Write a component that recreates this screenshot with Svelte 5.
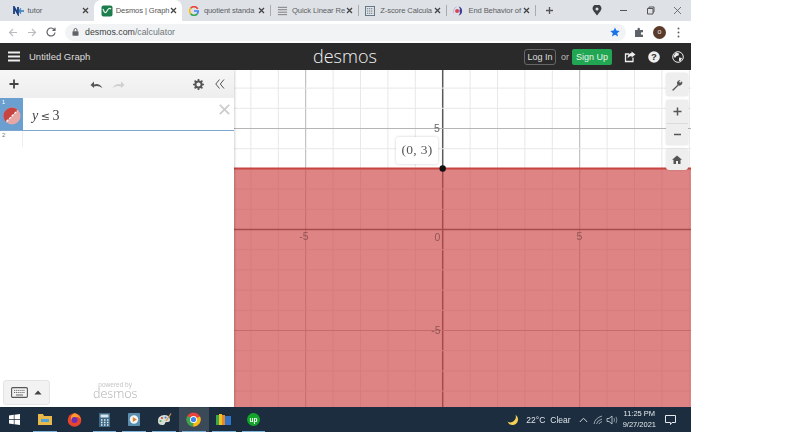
<script>
  const tabs = [
    { t: 'tutor', k: 'ne' },
    { t: 'Desmos | Graph', k: 'de', active: true },
    { t: 'quotient standa', k: 'g' },
    { t: 'Quick Linear Re', k: 'q', sep: true },
    { t: 'Z-score Calcula', k: 'z', sep: true },
    { t: 'End Behavior of', k: 'e', sep: true }
  ];
  const ox = 442.7, oy = 229.5, ux = 27.4, uy = 20.2;
  const xs = [];
  for (let i = -7; i <= 9; i++) xs.push({ v: i, x: ox + i * ux });
  const ys = [];
  for (let i = -8; i <= 7; i++) ys.push({ v: i, y: oy - i * uy });
  const under = [true, false, true, true, true, true, true, true];
</script>

<div class="page">
  <div class="window">
    <div class="tabstrip">
      {#each tabs as tab}
        <div class="tab" class:active={tab.active} class:sep={tab.sep}>
          <span class="fav">
            {#if tab.k === 'ne'}
              <svg width="12" height="10" viewBox="0 0 12 10"><path d="M1 8V1l4 7V1" fill="none" stroke="#1c3f80" stroke-width="1.8"/><path d="M7 5h4M8 2.500a3 3 0 0 0 0 5" fill="none" stroke="#2a7bc0" stroke-width="1.300"/></svg>
            {:else if tab.k === 'de'}
              <svg width="12" height="12" viewBox="0 0 12 12"><rect x=".5" y=".5" width="11" height="11" rx="2" fill="#1e7d4c"/><path d="M2 4q2 6 4 2t4-2" fill="none" stroke="#dff2e6" stroke-width="1.200"/></svg>
            {:else if tab.k === 'g'}
              <svg width="10" height="10" viewBox="0 0 12 12"><path d="M10.500 3.500A5 5 0 0 0 2 2.800" fill="none" stroke="#ea4335" stroke-width="2"/><path d="M2 2.800a5 5 0 0 0 0 6.400" fill="none" stroke="#fbbc05" stroke-width="2"/><path d="M2 9.200a5 5 0 0 0 8 0" fill="none" stroke="#34a853" stroke-width="2"/><path d="M10 9.200A5 5 0 0 0 11 6H6" fill="none" stroke="#4285f4" stroke-width="2"/></svg>
            {:else if tab.k === 'q'}
              <svg width="11" height="10" viewBox="0 0 12 10"><path d="M1 1h10M1 3.600h10M1 6.300h10M1 9h10" stroke="#777" stroke-width="1"/></svg>
            {:else if tab.k === 'z'}
              <svg width="10" height="10" viewBox="0 0 11 11"><rect x=".5" y=".5" width="10" height="10" fill="#e4e6e8" stroke="#5c6f80"/><path d="M2 3h7M2 5.500h7M2 8h7" stroke="#5c6f80" stroke-width="1" stroke-dasharray="1.500 .7"/></svg>
            {:else}
              <svg width="10" height="10" viewBox="0 0 11 11"><path d="M6 .6a5 5 0 0 1 0 9.800 4 4 0 0 0 1-4.900A4 4 0 0 0 6 .6z" fill="#3f3f97"/><circle cx="4.500" cy="5.500" r="2.200" fill="#d9425a"/><path d="M4 1A5 5 0 0 0 1 8" fill="none" stroke="#b9b9dd"/></svg>
            {/if}
          </span>
          <span class="tabtitle">{tab.t}</span>
          <svg class="tabx" width="7" height="7" viewBox="0 0 7 7"><path d="M1 1l5 5M6 1l-5 5" stroke="#444" stroke-width="1.300"/></svg>
        </div>
      {/each}
      <span class="lastsep"></span>
      <svg class="newtab" width="9" height="9" viewBox="0 0 9 9"><path d="M4.500 1v7M1 4.500h7" stroke="#555" stroke-width="1.300"/></svg>
      <span class="grow"></span>
      <svg class="winrec" width="10" height="11" viewBox="0 0 10 11"><path d="M5 10.500 1.500 6a4.300 4.300 0 1 1 7 0z" fill="#3c4043"/><circle cx="5" cy="4" r="1.500" fill="#dee1e6"/></svg>
      <div class="winbtns">
        <svg width="9" height="9" viewBox="0 0 9 9"><path d="M1 4.500h7" stroke="#555"/></svg>
        <svg width="9" height="9" viewBox="0 0 9 9"><path d="M1.500 2.500h5.500v5.500h-5.500zM3 2.500V1h5v5H7" fill="none" stroke="#555"/></svg>
        <svg width="9" height="9" viewBox="0 0 9 9"><path d="M1 1l7 7M8 1l-7 7" stroke="#555" stroke-width=".8"/></svg>
      </div>
    </div>

    <div class="urlbar">
      <svg width="10" height="9" viewBox="0 0 10 9"><path d="M9 4.500H1.500M5 1 1.500 4.500 5 8" fill="none" stroke="#b9bcc0" stroke-width="1.200"/></svg>
      <svg width="10" height="9" viewBox="0 0 10 9"><path d="M1 4.500h7.500M5 1l3.500 3.500L5 8" fill="none" stroke="#b9bcc0" stroke-width="1.200"/></svg>
      <svg width="10" height="10" viewBox="0 0 10 10"><path d="M8.500 3A4 4 0 1 0 9 5.500M9 .8V3.400H6.400" fill="none" stroke="#5f6368" stroke-width="1.200"/></svg>
      <div class="omni">
        <svg width="7" height="8" viewBox="0 0 7 8"><rect x=".5" y="3.200" width="6" height="4.500" rx=".6" fill="#5f6368"/><path d="M2 3.500V2a1.500 1.500 0 0 1 3 0v1.500" fill="none" stroke="#5f6368"/></svg>
        <span class="url">desmos.com<span class="urlpath">/calculator</span></span>
        <span class="grow"></span>
        <svg width="10" height="10" viewBox="0 0 10 10"><path d="M5 .5 6.400 3.600 9.700 4 7.200 6.200 8 9.500 5 7.800 2 9.500 2.800 6.200.3 4 3.600 3.600z" fill="#1a73e8"/></svg>
      </div>
      <svg class="puzzle" width="10" height="10" viewBox="0 0 10 10"><path d="M1 3h2.500V2a1.200 1.200 0 0 1 2.400 0v1H9v2.300H8a1.200 1.200 0 0 0 0 2.400h1V10H1z" fill="#5f6368"/></svg>
      <span class="avatar">o</span>
      <svg class="dots" width="3" height="11" viewBox="0 0 3 11"><circle cx="1.500" cy="1.500" r="1" fill="#5f6368"/><circle cx="1.500" cy="5.500" r="1" fill="#5f6368"/><circle cx="1.500" cy="9.500" r="1" fill="#5f6368"/></svg>
    </div>

    <header class="dheader">
      <div class="hleft">
        <svg width="12" height="11" viewBox="0 0 12 11"><path d="M0 1.500h12M0 5.500h12M0 9.500h12" stroke="#eee" stroke-width="1.800"/></svg>
        <span class="gtitle">Untitled Graph</span>
      </div>
      <span class="logo">desmos</span>
      <div class="hright">
        <span class="login">Log In</span>
        <span class="or">or</span>
        <span class="signup">Sign Up</span>
        <svg class="hicon first" width="12" height="12" viewBox="0 0 12 12"><path d="M9 6.500V10.500H1.500V3H5" fill="none" stroke="#eee" stroke-width="1.300"/><path d="M11.500 3.500 7.500.5V2Q3.500 2.500 3.500 7.500 5 4.800 7.500 5V6.500z" fill="#eee"/></svg>
        <svg class="hicon" width="12" height="12" viewBox="0 0 12 12"><circle cx="6" cy="6" r="5.800" fill="#eee"/><text x="6" y="9.300" class="qm">?</text></svg>
        <svg class="hicon" width="12" height="12" viewBox="0 0 12 12"><circle cx="6" cy="6" r="5.300" fill="#2a2a2a" stroke="#eee" stroke-width="1"/><path d="M4 1.500 7 2.500 6.500 4.500 4.500 5 3 7 1.500 5zM7 6.500l3 .5-1.500 3H7z" fill="#eee"/></svg>
      </div>
    </header>

    <div class="main">
      <aside class="side">
        <div class="sidebar-tools">
          <svg class="plus" width="10" height="10" viewBox="0 0 10 10"><path d="M5 .5v9M.5 5h9" stroke="#444" stroke-width="1.800"/></svg>
          <svg class="undo" width="13" height="9" viewBox="0 0 13 9"><path d="M12.500 8Q9.500 3 4 4.400V1.500L.5 5 4 8V6.500Q8 5 12.500 8z" fill="#555"/></svg>
          <svg class="redo" width="13" height="9" viewBox="0 0 13 9"><path d="M.5 8Q3.500 3 9 4.400V1.500L12.500 5 9 8V6.500Q5 5 .5 8z" fill="#cfcfcf"/></svg>
          <span class="grow"></span>
          <svg width="11" height="11" viewBox="0 0 11 11"><circle cx="5.500" cy="5.500" r="3.100" fill="none" stroke="#555" stroke-width="2"/><path d="M5.500 0v2M5.500 9v2M0 5.500h2M9 5.500h2M1.600 1.600 3 3M8 8l1.400 1.400M9.400 1.600 8 3M3 8 1.600 9.400" stroke="#555" stroke-width="1.700"/></svg>
          <svg class="collapse" width="10" height="10" viewBox="0 0 10 10"><path d="M4.500 .5.800 5l3.700 4.500M9 .5 5.300 5 9 9.500" fill="none" stroke="#555" stroke-width="1"/></svg>
        </div>
        <div class="expr active-expr">
          <div class="strip">
            <span class="num light">1</span>
            <svg width="18" height="18" viewBox="0 0 18 18" class="swatch"><circle cx="9" cy="9" r="8.500" fill="#e8a7a5"/><path d="M2.900 15A8.500 8.500 0 0 1 15 2.900z" fill="#c74440"/><path d="M3.500 14.500 14.500 3.500" stroke="#fff" stroke-width="1.300" stroke-dasharray="2.500 1.200"/></svg>
          </div>
          <div class="math"><i>y</i><span class="leq">≤</span>3</div>
          <svg class="del" width="11" height="11" viewBox="0 0 11 11"><path d="M.8.800l9.400 9.400M10.200.800.800 10.200" stroke="#ccc" stroke-width="1.800"/></svg>
        </div>
        <div class="expr empty-expr">
          <div class="strip blank"><span class="num">2</span></div>
        </div>
        <span class="grow"></span>
        <div class="sidefoot">
          <div class="kbd">
            <svg width="17" height="11" viewBox="0 0 17 11"><rect x=".6" y=".6" width="15.800" height="9.800" rx="1.200" fill="none" stroke="#555" stroke-width="1.100"/><path d="M3 3.400h11M3 5.500h11" stroke="#666" stroke-dasharray="1.200 .9"/><path d="M5 8h7" stroke="#666"/></svg>
            <svg width="8" height="5" viewBox="0 0 8 5"><path d="M4 .4 7.600 4.500H.4z" fill="#444"/></svg>
          </div>
          <div class="powered">
            <span class="pw">powered by</span>
            <span class="pd">desmos</span>
          </div>
        </div>
      </aside>

      <div class="graph">
        <svg class="plot" viewBox="234 70 457 337" width="457" height="337">
          <rect x="234" y="70" width="457" height="337" fill="#fff"/>
          {#each xs as l}
            <line x1={l.x} x2={l.x} y1="70" y2="407" stroke={l.v === 0 ? '#5a5a5a' : l.v % 5 === 0 ? '#b5b5b5' : '#e8e8e8'} stroke-width={l.v === 0 ? 1.500 : 1}/>
          {/each}
          {#each ys as l}
            <line x1="234" x2="691" y1={l.y} y2={l.y} stroke={l.v === 0 ? '#5a5a5a' : l.v % 5 === 0 ? '#b5b5b5' : '#e8e8e8'} stroke-width={l.v === 0 ? 1.500 : 1}/>
          {/each}
          <rect x="234" y="168.500" width="457" height="238.500" fill="#cf4444" opacity=".66"/>
          <line x1="234" x2="691" y1="168.500" y2="168.500" stroke="#c74440" stroke-width="2"/>
          <text class="lbl" x="304" y="240" text-anchor="middle">-5</text>
          <text class="lbl" x="437.500" y="240.500" text-anchor="middle">0</text>
          <text class="lbl" x="579.500" y="240" text-anchor="middle">5</text>
          <text class="lbl dark" x="437" y="131.500" text-anchor="middle">5</text>
          <text class="lbl" x="436" y="334" text-anchor="middle">-5</text>
          <circle cx="442.700" cy="168.500" r="3.200" fill="#111"/>
        </svg>
        <div class="tooltip">(0, 3)</div>
        <div class="controls">
          <div class="cbtn tall">
            <svg width="12" height="12" viewBox="0 0 12 12"><path d="M1 11 6.500 5.800A3 3 0 0 1 8.200 1.200L9.500 1 8 2.800l1.200 1L11 2.200A3 3 0 0 1 7.500 6.500L2.300 11.800z" fill="#555"/></svg>
          </div>
          <div class="cgroup">
            <div class="cbtn half"><svg width="9" height="9" viewBox="0 0 9 9"><path d="M4.500.5v8M.5 4.500h8" stroke="#555" stroke-width="1.500"/></svg></div>
            <div class="cbtn half sep"><svg width="9" height="3" viewBox="0 0 9 3"><path d="M1 1.500h7" stroke="#555" stroke-width="1.500"/></svg></div>
          </div>
          <div class="cbtn short">
            <svg width="10" height="9" viewBox="0 0 10 9"><path d="M5 .5 0 4.800h1.500V9h2.500V6h2v3h2.500V4.800H10z" fill="#555"/></svg>
          </div>
        </div>
      </div>
    </div>

    <footer class="taskbar">
      <svg class="start" width="11" height="11" viewBox="0 0 11 11"><path d="M0 1.500 4.800.8v4.400H0zM5.500.7 11 0v5.200H5.500zM0 5.900h4.800v4.300L0 9.500zM5.500 5.900H11V11l-5.500-.8z" fill="#fff"/></svg>
      <div class="ticons">
        {#each under as on, i}
          <div class="tslot" class:on={i === 5} class:ul={on}>
            {#if i === 0}
              <svg width="14" height="11" viewBox="0 0 14 11"><path d="M0 0h5l1 2h8v9H0z" fill="#e8b84a"/><path d="M3 5h8v3H3z" fill="#4ea3d8"/></svg>
            {:else if i === 1}
              <svg width="15" height="15" viewBox="0 0 15 15"><circle cx="7.500" cy="8" r="6.800" fill="#e8442e"/><path d="M7.500 1Q13 3 14 8q-1-2-3-3-2 0-3 1 2 1 1 3-3 1-5-1-1-3 1-5z" fill="#ff9a2e"/><circle cx="7.500" cy="8" r="3" fill="#6b2fb8"/></svg>
            {:else if i === 2}
              <svg width="11" height="14" viewBox="0 0 11 14"><rect width="11" height="14" fill="#3f6b88"/><rect x="1.500" y="1.500" width="8" height="3" fill="#d8e6ee"/><path d="M2 7h1.500M5 7h1.500M8 7h1.500M2 9.500h1.500M5 9.500h1.500M8 9.500h1.500M2 12h1.500M5 12h1.500M8 12h1.500" stroke="#e6eef2" stroke-width="1.300"/></svg>
            {:else if i === 3}
              <svg width="12" height="13" viewBox="0 0 12 13"><rect width="12" height="13" rx="1" fill="#5b8fb0"/><circle cx="6" cy="6.500" r="4.200" fill="#f5f5f5"/><path d="M4.800 4v5l4-2.500z" fill="#e2812c"/></svg>
            {:else if i === 4}
              <svg width="15" height="14" viewBox="0 0 15 14"><path d="M1 9Q0 3 7 2q6 0 6 5 0 2-2 2-2.500-.5-3 1 0 2-3 2-3.500 0-4-3z" fill="#d8dcd6"/><circle cx="5" cy="5" r="1.100" fill="#d84a3a"/><circle cx="8.500" cy="4.500" r="1.100" fill="#3f8ad8"/><circle cx="3.500" cy="8" r="1.100" fill="#4aae5a"/><path d="M9 8 14 .5" stroke="#c89a50" stroke-width="1.300"/></svg>
            {:else if i === 5}
              <svg width="15" height="15" viewBox="0 0 15 15"><circle cx="7.500" cy="7.500" r="7" fill="#e8453a"/><path d="M7.500 7.500 1.400 11A7 7 0 0 1 1.400 4z" fill="#34a853"/><path d="M7.500 7.500 14 4.500A7 7 0 0 1 7 14.500z" fill="#f5bc15"/><path d="M1.400 11 7.500 7.500 7 14.500A7 7 0 0 1 1.400 11z" fill="#34a853"/><circle cx="7.500" cy="7.500" r="3.500" fill="#fff"/><circle cx="7.500" cy="7.500" r="2.600" fill="#3f85f2"/></svg>
            {:else if i === 6}
              <svg width="15" height="12" viewBox="0 0 15 12"><rect y="1" width="3" height="10" fill="#3aa84c"/><rect x="3" y="0" width="3" height="11" fill="#f0c224"/><rect x="6" y="1" width="3" height="10" fill="#e8862a"/><rect x="9" y="2" width="6" height="9" fill="#2f74c8"/></svg>
            {:else if i === 7}
              <svg width="13" height="13" viewBox="0 0 13 13"><circle cx="6.500" cy="6.500" r="6.500" fill="#12a52a"/><text x="6.500" y="8.800" class="up">up</text></svg>
            {/if}
          </div>
        {/each}
      </div>
      <span class="grow"></span>
      <div class="tray">
        <svg class="moon" width="12" height="12" viewBox="0 0 12 12"><path d="M7.500.5A5.500 5.500 0 0 1 .8 8.500 5.500 5.500 0 1 0 7.500.5z" fill="#f6cf55" transform="rotate(10 6 6)"/></svg>
        <span class="weather">22°C</span>
        <span class="weather clear">Clear</span>
        <svg class="chev" width="9" height="6" viewBox="0 0 9 6"><path d="M.8 5 4.500 1.200 8.200 5" fill="none" stroke="#cfd6dc"/></svg>
        <svg class="wifi" width="10" height="10" viewBox="0 0 10 10"><path d="M1 9Q2 3 9 1M3.500 9Q4 5.500 9 4M6 9q.3-1.700 3-2.400" fill="none" stroke="#9aa6b0"/></svg>
        <svg class="spk" width="12" height="10" viewBox="0 0 12 10"><path d="M1 3.500h2L6 1v8L3 6.500H1z" fill="none" stroke="#cfd6dc" stroke-width=".8"/><path d="M8 3q1 2 0 4M10 1.800q1.800 3.200 0 6.400" fill="none" stroke="#9aa6b0" stroke-width=".8"/></svg>
        <div class="clock"><span>11:25 PM</span><span>9/27/2021</span></div>
        <svg class="notif" width="11" height="10" viewBox="0 0 11 10"><path d="M.5.500h10v7H7L5.500 9.500V7.500H.5z" fill="none" stroke="#e4e8ec"/></svg>
      </div>
    </footer>
  </div>
</div>

<style>
  :global(body) { margin: 0; background: #fff; }
  .page { width: 800px; height: 432px; overflow: hidden; background: #fff; font-family: "Liberation Sans", sans-serif; }
  .window { width: 691px; height: 432px; display: flex; flex-direction: column; filter: blur(0.4px); }
  .grow { flex: 1; }

  .tabstrip { height: 21px; background: #dee1e6; display: flex; align-items: center; flex-shrink: 0; }
  .tab { width: 88.200px; height: 21px; box-sizing: border-box; display: flex; align-items: center; padding-left: 7px; padding-right: 5px; flex-shrink: 0; position: relative; }
  .tab:first-child { margin-left: 5.500px; }
  .tab.active { background: #fff; border-radius: 7px 7px 0 0; }
  .tab.sep::before { content: ""; position: absolute; left: 0; top: 5px; height: 11px; width: 1px; background: #a8abb0; }
  .lastsep { width: 1px; height: 11px; background: #a8abb0; flex-shrink: 0; }
  .fav { width: 15px; display: flex; justify-content: flex-start; flex-shrink: 0; }
  .tabtitle { flex: 1; font-size: 7.600px; letter-spacing: -.1px; color: #5a5d61; white-space: nowrap; min-width: 0; }
  .tab.active .tabtitle { color: #555; }
  .tabx { flex-shrink: 0; margin-left: 3px; }
  .newtab { margin-left: 9px; }
  .winrec { margin-right: 17px; }
  .winbtns { display: flex; gap: 18px; margin-right: 9px; }

  .urlbar { height: 22px; background: #fff; display: flex; align-items: center; gap: 9px; padding-left: 8px; flex-shrink: 0; }
  .omni { width: 561px; height: 17px; box-sizing: border-box; border-radius: 9px; background: #f1f3f4; display: flex; align-items: center; padding: 0 6px 0 7px; gap: 6px; }
  .url { font-size: 8.800px; color: #3c4043; }
  .urlpath { color: #70757a; }
  .puzzle { margin-left: -1px; }
  .avatar { width: 13px; height: 13px; border-radius: 50%; background: #5b3a29; color: #eee; font-size: 7px; line-height: 12px; text-align: center; margin-left: 0; }
  .dots { margin-left: 2px; }

  .dheader { height: 27px; background: #2a2a2a; display: flex; align-items: center; flex-shrink: 0; }
  .hleft { display: flex; align-items: center; gap: 9px; padding-left: 8px; width: 305px; flex-shrink: 0; box-sizing: border-box; }
  .gtitle { font-size: 9.500px; color: #ddd; }
  .logo { font-family: "Open Sans", sans-serif; font-weight: 300; font-size: 18px; line-height: 27px; color: #f2f2f2; margin-left: 8px; }
  .hright { margin-left: auto; display: flex; align-items: center; padding-right: 7px; }
  .login { width: 32px; height: 16px; box-sizing: border-box; border: 1px solid #666; border-radius: 3px; font-size: 9px; line-height: 14px; color: #ddd; text-align: center; }
  .or { font-size: 9px; color: #bbb; margin: 0 5px; width: 6px; text-align: center; }
  .signup { width: 40px; height: 16px; background: #21a653; border-radius: 2px; font-size: 9px; line-height: 16px; color: #e8f5ec; text-align: center; }
  .hicon { margin-left: 12px; }
  .hicon.first { margin-left: 12px; }
  .qm { font: bold 9.500px "Liberation Sans", sans-serif; text-anchor: middle; fill: #2a2a2a; }

  .main { flex: 1; display: flex; min-height: 0; }
  .side { width: 234px; flex-shrink: 0; display: flex; flex-direction: column; background: #fff; box-shadow: 1px 0 2px rgba(0,0,0,.18); position: relative; z-index: 1; }
  .sidebar-tools { height: 28px; background: linear-gradient(#f6f6f6, #eeeeee); display: flex; align-items: center; padding: 0 9px; flex-shrink: 0; }
  .plus { margin-right: 71px; }
  .undo { margin-right: 9px; }
  .collapse { margin-left: 11px; }
  .expr { display: flex; position: relative; flex-shrink: 0; }
  .active-expr { height: 33px; box-sizing: border-box; border-bottom: 1px solid #7fa6cc; }
  .empty-expr { height: 16px; }
  .strip { width: 23px; flex-shrink: 0; background: #6a9fd0; position: relative; display: flex; align-items: center; justify-content: center; }
  .strip.blank { background: #fff; border-right: 1px solid #eee; width: 22px; }
  .num { position: absolute; left: 2px; top: 1px; font-size: 6px; color: #777; }
  .num.light { color: #fff; }
  .swatch { margin-top: 3px; }
  .math { font: 14px/35px "Liberation Serif", serif; color: #444; padding-left: 9px; }
  .leq { margin: 0 2.500px; font-family: "DejaVu Serif", serif; font-size: 11px; }
  .del { position: absolute; right: 4px; top: 6px; }
  .sidefoot { height: 27px; display: flex; align-items: flex-start; padding-left: 3px; flex-shrink: 0; }
  .kbd { width: 47px; height: 25px; box-sizing: border-box; background: #f2f2f2; border: 1px solid #e4e4e4; border-radius: 3px; display: flex; align-items: center; justify-content: center; gap: 6px; }
  .powered { display: flex; flex-direction: column; align-items: center; margin-left: 43px; margin-top: 1px; color: #c4c4c4; }
  .pw { font-size: 6.500px; line-height: 7px; }
  .pd { font-family: "Open Sans", sans-serif; font-size: 12.500px; font-weight: 300; line-height: 12px; color: #b0b0b0; }

  .graph { flex: 1; position: relative; overflow: hidden; }
  .plot { display: block; }
  .lbl { font: 10.500px "Liberation Sans", sans-serif; fill: #8f5656; }
  .lbl.dark { fill: #666; }
  .tooltip { position: absolute; left: 162px; top: 67px; width: 42px; height: 27px; box-sizing: border-box; background: #fff; border-radius: 3px; box-shadow: 0 0 3px rgba(0,0,0,.2); font: 13.500px/26px "Liberation Serif", serif; color: #555; text-align: center; letter-spacing: .3px; }
  .controls { position: absolute; right: 3px; top: 3px; width: 22px; display: flex; flex-direction: column; gap: 4px; }
  .cbtn { background: #eeeeee; display: flex; align-items: center; justify-content: center; border-radius: 3px; box-shadow: 0 0 2px rgba(0,0,0,.15); }
  .tall { height: 23px; }
  .short { height: 21px; }
  .cgroup { display: flex; flex-direction: column; box-shadow: 0 0 2px rgba(0,0,0,.15); border-radius: 3px; }
  .half { height: 22.500px; box-shadow: none; border-radius: 0; }
  .half.sep { border-top: 1px solid #dcdcdc; box-sizing: border-box; }

  .taskbar { height: 25px; background: #1b2d3e; display: flex; align-items: center; flex-shrink: 0; color: #e4e8ec; }
  .start { margin-left: 9px; margin-right: 10px; flex-shrink: 0; }
  .ticons { display: flex; height: 25px; }
  .tslot { width: 29.800px; height: 25px; display: flex; align-items: center; justify-content: center; position: relative; }
  .tslot.on { background: #3a4a58; }
  .tslot.ul::after { content: ""; position: absolute; left: 3px; right: 3px; bottom: 0; height: 1px; background: #7fb4dc; }
  .up { font: bold 6.500px "Liberation Sans", sans-serif; text-anchor: middle; fill: #fff; }
  .tray { display: flex; align-items: center; }
  .moon { margin-right: 7px; }
  .weather { font-size: 8.500px; color: #dfe4e8; }
  .clear { margin-left: 5px; }
  .chev { margin-left: 8.500px; }
  .wifi { margin-left: 4.500px; }
  .spk { margin-left: 3px; }
  .clock { display: flex; flex-direction: column; align-items: center; font-size: 7.500px; line-height: 10.500px; margin-left: 5px; color: #e4e8ec; }
  .notif { margin-left: 9px; margin-right: 15px; }
</style>
